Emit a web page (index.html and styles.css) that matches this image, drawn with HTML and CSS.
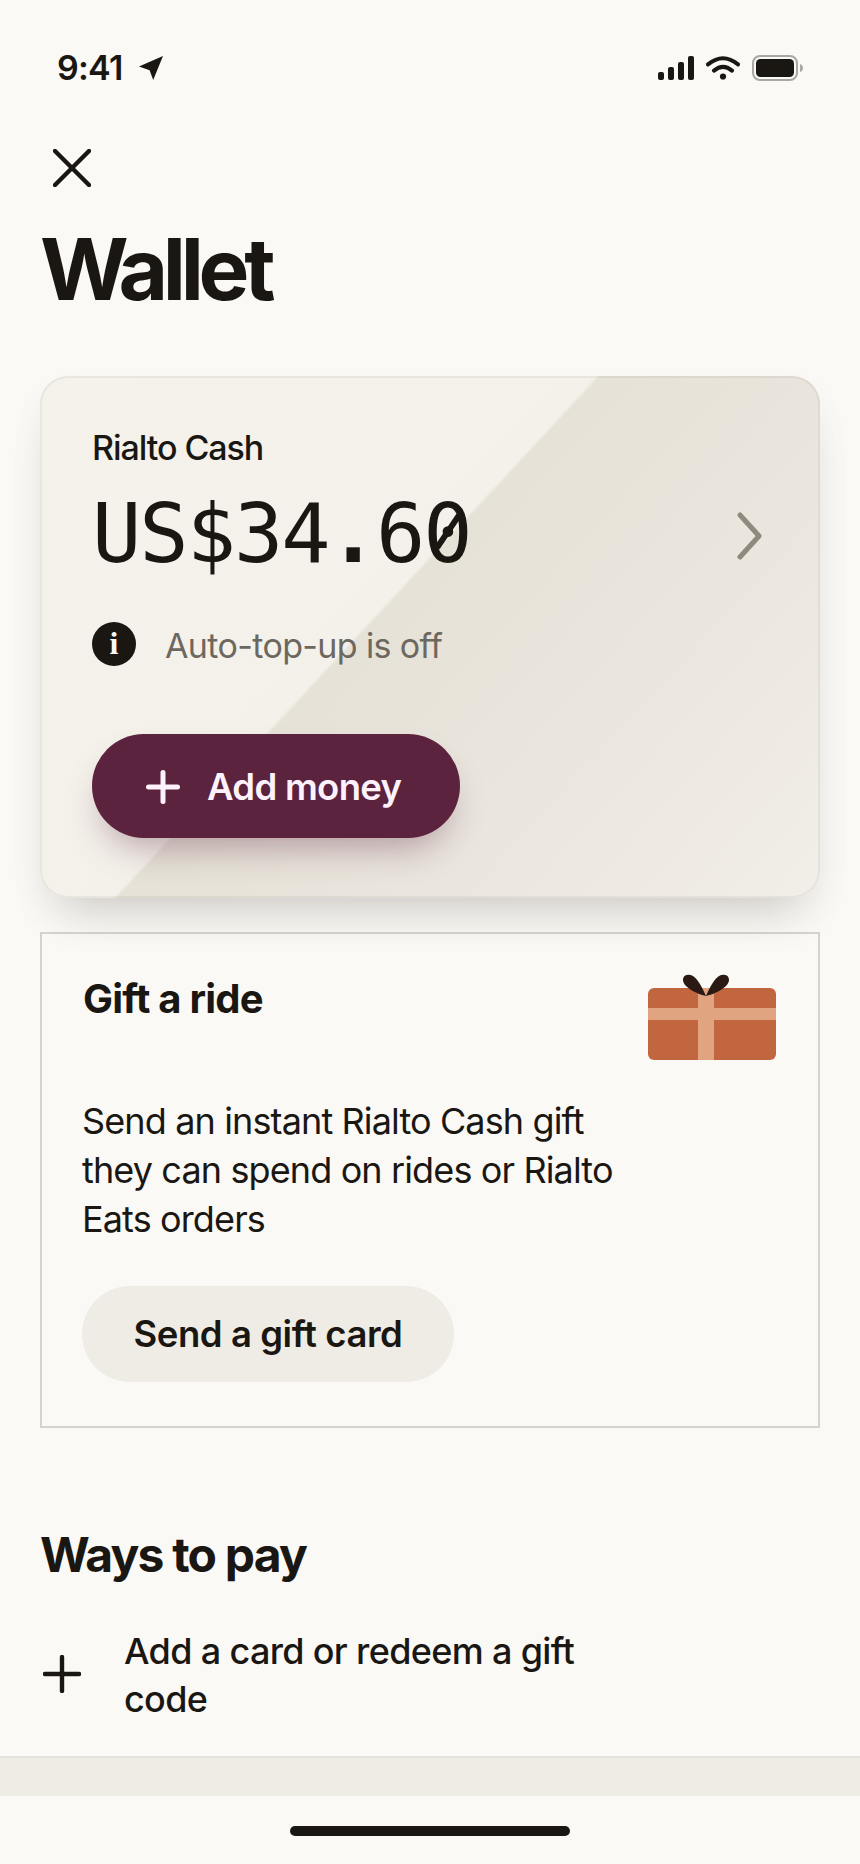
FILE: index.html
```html
<!DOCTYPE html>
<html lang="en">
<head>
<meta charset="utf-8">
<title>Wallet</title>
<link rel="stylesheet" href="styles.css">
</head>
<body>
<main class="screen">
  <div class="status">
    <div class="status-left">
      <span class="time">9:41</span>
      <svg class="location" viewBox="0 0 24 24"><path d="M24 0 14.2 24 10.6 14.2 0 10.5Z"/></svg>
    </div>
    <div class="status-right">
      <svg class="signal" viewBox="0 0 36 24"><rect x="0" y="16" width="6" height="8" rx="2"/><rect x="10" y="11" width="6" height="13" rx="2"/><rect x="20" y="6" width="6" height="18" rx="2"/><rect x="30" y="0" width="6" height="24" rx="2"/></svg>
      <svg class="wifi" viewBox="0 0 34 24"><path d="M2 8.4Q17-3.8 32 8.4M8 14.6Q17 7.2 26 14.6"/><circle cx="17" cy="20.5" r="3.1"/></svg>
      <svg class="battery" viewBox="0 0 52 26"><rect class="case" x="1" y="1" width="44" height="24" rx="7"/><rect x="4" y="4" width="38" height="18" rx="4.5"/><path class="tip" d="M48 9Q51 10 51 13T48 17Z"/></svg>
    </div>
  </div>

  <button class="close" aria-label="Close"><svg viewBox="0 0 38 38"><path d="M2 2 36 36M36 2 2 36"/></svg></button>
  <h1 class="title">Wallet</h1>

  <section class="cash">
    <div class="cash-info">
      <div class="cash-label">Rialto Cash</div>
      <div class="balance">US$34<span class="point">.</span>6<span class="zero">0</span></div>
      <div class="topup"><span class="badge">i</span><span class="topup-text">Auto-top-up is off</span></div>
      <button class="add-money"><svg viewBox="0 0 34 34"><path d="M17 2.5V31.5M2.5 17H31.5"/></svg><span>Add money</span></button>
    </div>
    <svg class="chevron" viewBox="0 0 26 50"><path d="M3 4 22 25 3 46"/></svg>
  </section>

  <section class="gift">
    <div class="gift-head">
      <h2 class="gift-title">Gift a ride</h2>
      <svg class="gift-art" viewBox="0 0 128 86">
        <rect class="box" y="14" width="128" height="72" rx="6"/>
        <path class="ribbon" d="M0 34H50V14H66V34H128V46H66V86H50V46H0Z"/>
        <path class="bow" d="M58 22C49 20 35 13 35 6C35 2 38 .8 41 .8C48 .8 54 13 58 22ZM58 22C67 20 81 13 81 6C81 2 78 .8 75 .8C68 .8 62 13 58 22Z"/>
      </svg>
    </div>
    <p class="gift-text">Send an instant Rialto Cash gift<br>they can spend on rides or Rialto<br>Eats orders</p>
    <button class="send">Send a gift card</button>
  </section>

  <h2 class="ways">Ways to pay</h2>
  <div class="pay-row">
    <svg class="plus" viewBox="0 0 38 38"><path d="M19 2V36M2 19H36"/></svg>
    <span class="pay-text">Add a card or redeem a gift<br>code</span>
  </div>
  <div class="band"></div>
  <div class="home"></div>
</main>
</body>
</html>
```
FILE: styles.css
```css
* { box-sizing: border-box; }
body { margin: 0; background: #fbf9f5; color: #1a1713; font-family: Inter, "Liberation Sans", sans-serif; }
h1, h2, p { margin: 0; }
button { border: 0; padding: 0; background: none; color: inherit; font: inherit; }
svg { display: block; flex: none; }
.screen { width: 860px; height: 1864px; display: flex; flex-direction: column; overflow: hidden; }

.status { display: flex; justify-content: space-between; padding: 47px 56px 0 57px; height: 149px; }
.status-left { display: flex; align-items: flex-start; gap: 16px; height: 42px; }
.time { font-size: 34px; line-height: 42px; font-weight: 600; letter-spacing: -0.75px; }
.location { width: 24px; height: 24px; margin-top: 9px; fill: #1a1713; }
.status-right { display: flex; align-items: center; gap: 12px; height: 42px; }
.signal { width: 36px; height: 24px; fill: #1a1713; }
.wifi { width: 34px; height: 24px; fill: #1a1713; }
.wifi path { fill: none; stroke: #1a1713; stroke-width: 4; stroke-linecap: round; }
.battery { width: 52px; height: 26px; fill: #1a1713; }
.battery .case { fill: none; stroke: #aaa8a4; stroke-width: 2; }
.battery .tip { fill: #aaa8a4; }

.close { width: 38px; height: 38px; margin-left: 53px; }
.close svg { width: 38px; height: 38px; fill: none; stroke: #1a1713; stroke-width: 4.4; stroke-linecap: round; }
.title { margin: 30px 0 0 40px; font-size: 85.5px; line-height: 104px; font-weight: 700; letter-spacing: -5.3px; }

.cash {
  display: flex; justify-content: space-between; margin: 55px 40px 0; height: 522px; padding: 49px 55px 0 50px;
  border: 2px solid rgba(26, 23, 19, 0.05); border-radius: 28px;
  background: linear-gradient(132.8deg, #f5f2eb 0%, #f4f1ea 44%, #e6e2d7 44.4%, #ebe6df 72%, #f2eee8 100%) border-box;
  box-shadow: 0 28px 48px -22px rgba(26, 23, 19, 0.22), 0 18px 44px rgba(26, 23, 19, 0.03);
}
.cash-label { font-size: 34px; line-height: 42px; font-weight: 500; letter-spacing: -1.05px; }
.balance { margin-top: 17px; height: 96px; font: 82px/96px "DejaVu Sans Mono", monospace; letter-spacing: -2.05px; }
.point { font-weight: 700; }
.zero { position: relative; }
/* diagonal bar of the slashed zero */
.zero::after { content: ""; position: absolute; left: 21.6px; top: 26px; width: 6px; height: 39px; background: #1a1713; transform: rotate(34deg); }
.topup { display: flex; align-items: center; gap: 29px; margin-top: 40px; height: 44px; font-size: 34px; color: #6d685f; letter-spacing: -0.63px; }
.topup-text { padding-top: 3px; }
.badge { width: 44px; height: 44px; border-radius: 50%; background: #1a1713; color: #fbf9f5; font: 700 32px/43px "Liberation Serif", serif; letter-spacing: 0; text-align: center; }
.add-money {
  display: flex; align-items: center; gap: 27px; width: 368px; height: 104px; margin-top: 68px; padding: 1px 0 0 54px;
  border-radius: 52px; background: #5b233d; color: #fdf2fb; font-size: 36.5px; font-weight: 600; letter-spacing: -0.7px;
  box-shadow: 0 20px 36px -12px rgba(91, 35, 61, 0.4);
}
.add-money svg { width: 34px; height: 34px; fill: none; stroke: #fdf2fb; stroke-width: 5; stroke-linecap: round; }
.chevron { width: 26px; height: 50px; margin-top: 84px; fill: none; stroke: #8f897e; stroke-width: 5; stroke-linecap: round; stroke-linejoin: round; }

.gift { margin: 34px 40px 0; height: 496px; padding: 40px 42px 0 40px; border: 2px solid rgba(26, 23, 19, 0.17); }
.gift-head { display: flex; justify-content: space-between; height: 126px; }
.gift-title { padding-left: 1px; font-size: 40px; line-height: 50px; font-weight: 700; letter-spacing: -0.8px; }
.gift-art { width: 128px; height: 86px; }
.box { fill: #c1663e; }
.ribbon { fill: #e1a480; }
.bow { fill: #2b1a13; }
.gift-text { font-size: 36px; line-height: 49px; letter-spacing: -0.87px; margin-top: -3.5px; }
.send { width: 372px; height: 96px; margin-top: 42.5px; border-radius: 48px; background: #eeece5; font-size: 36.5px; font-weight: 600; letter-spacing: -0.45px; }

.ways { margin: 97px 0 0 40px; font-size: 48px; line-height: 60px; font-weight: 700; letter-spacing: -1.8px; }
.pay-row { display: flex; align-items: center; gap: 43px; margin: 41px 0 0 43px; height: 96px; font-size: 36px; line-height: 48px; font-weight: 500; letter-spacing: -0.66px; }
.pay-text { padding-top: 2px; }
.plus { width: 38px; height: 38px; fill: none; stroke: #1a1713; stroke-width: 4.4; stroke-linecap: round; }
.band { margin-top: 34px; height: 40px; flex: none; background: #efece5; border-top: 2px solid #e4e2dc; }
.home { align-self: center; width: 280px; height: 10px; margin-top: 30px; border-radius: 5px; background: #1a1713; }
```
